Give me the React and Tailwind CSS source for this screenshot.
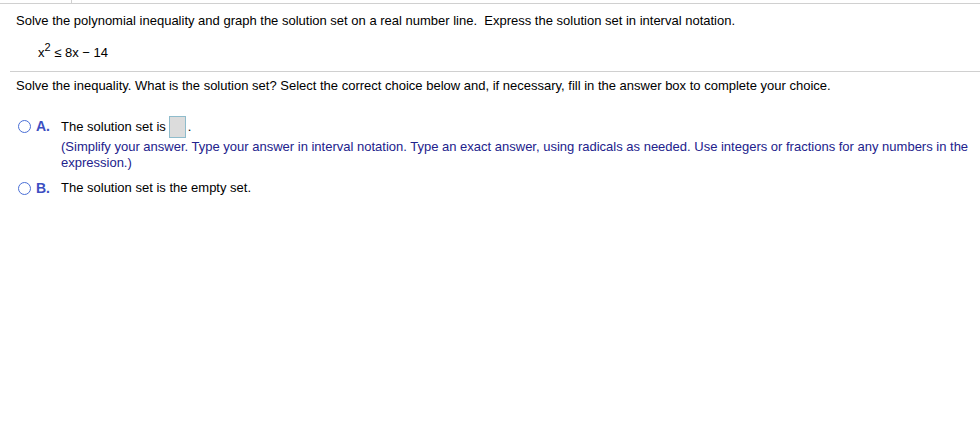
export default function App() {
  return (
    <div
      className="w-[980px] h-[431px] bg-white text-black text-[13px] leading-[16px]"
      style={{ fontFamily: '"Liberation Sans", Arial, sans-serif' }}
    >
      {/* top rule with small tick */}
      <div className="w-[72px] h-[3px] border-r border-[#d0d0d0]" />
      <div className="border-t border-[#d0d0d0]" />

      {/* question */}
      <div className="pt-[9px] pl-[16px]">
        Solve the polynomial inequality and graph the solution set on a real number line.&nbsp; Express the solution set in interval notation.
      </div>
      <div className="mt-[16px] pl-[38px] text-[13px]">
        x<sup className="text-[11px] -top-[6px]">2</sup> ≤ 8x − 14
      </div>

      <div className="mt-[10px] ml-[10px] border-t border-[#d0d0d0]" />

      <div className="mt-[6px] pl-[16px]">
        Solve the inequality. What is the solution set? Select the correct choice below and, if necessary, fill in the answer box to complete your choice.
      </div>

      {/* choice A */}
      <div className="mt-[22px] flex pl-[18px]">
        <div className="w-[18px] pt-[4px]">
          <div className="w-[13px] h-[13px] rounded-full border-[1.5px] border-[#4a6fd6]" />
        </div>
        <div className="w-[25px] pt-[2px] text-[14px] font-bold text-[#3d4fc2]">A.</div>
        <div className="w-[915px]">
          <div className="flex items-center h-[22px]">
            <span>The solution set is</span>
            <span className="ml-[3px] w-[17px] h-[22px] bg-[#dcdcdc] border border-[#8fbccc]" />
            <span className="ml-[2px]">.</span>
          </div>
          <div className="mt-px text-[#22228c]">
            (Simplify your answer. Type your answer in interval notation. Type an exact answer, using radicals as needed. Use integers or fractions for any numbers in the expression.)
          </div>
        </div>
      </div>

      {/* choice B */}
      <div className="mt-[9px] flex pl-[18px]">
        <div className="w-[18px] pt-[2px]">
          <div className="w-[13px] h-[13px] rounded-full border-[1.5px] border-[#4a6fd6]" />
        </div>
        <div className="w-[25px] text-[14px] font-bold text-[#3d4fc2]">B.</div>
        <div>The solution set is the empty set.</div>
      </div>
    </div>
  );
}
